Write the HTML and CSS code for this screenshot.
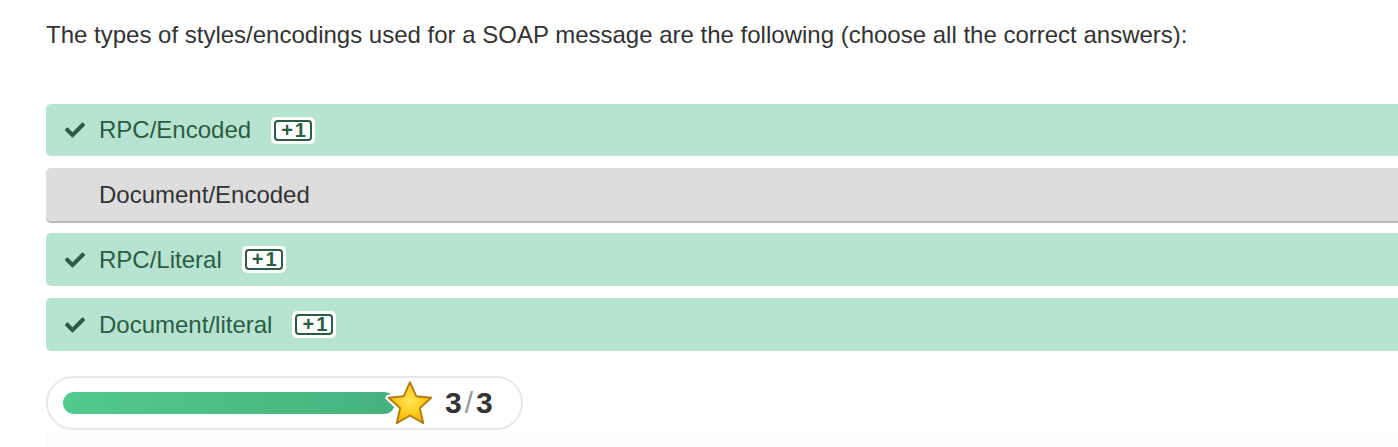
FILE: index.html
```html
<!DOCTYPE html>
<html>
<head>
<meta charset="utf-8">
<link rel="stylesheet" href="styles.css">
</head>
<body>
<div class="quiz">
  <p class="question">The types of styles/encodings used for a SOAP message are the following (choose all the correct answers):</p>
  <div class="answers">
    <div class="answer correct first">
      <svg class="check" viewBox="0 0 512 512" width="20" height="20"><path fill="currentColor" d="M173.898 439.404l-166.4-166.4c-9.997-9.997-9.997-26.206 0-36.204l36.203-36.204c9.997-9.998 26.207-9.998 36.204 0L192 312.69 432.095 72.596c9.997-9.997 26.207-9.997 36.204 0l36.203 36.204c9.997 9.997 9.997 26.206 0 36.204l-294.4 294.401c-9.998 9.997-26.207 9.997-36.204-.001z"/></svg>
      <span class="label">RPC/Encoded</span>
      <span class="badge"><span class="badge-inner">+1</span></span>
    </div>
    <div class="answer neutral">
      <span class="label">Document/Encoded</span>
    </div>
    <div class="answer correct">
      <svg class="check" viewBox="0 0 512 512" width="20" height="20"><path fill="currentColor" d="M173.898 439.404l-166.4-166.4c-9.997-9.997-9.997-26.206 0-36.204l36.203-36.204c9.997-9.998 26.207-9.998 36.204 0L192 312.69 432.095 72.596c9.997-9.997 26.207-9.997 36.204 0l36.203 36.204c9.997 9.997 9.997 26.206 0 36.204l-294.4 294.401c-9.998 9.997-26.207 9.997-36.204-.001z"/></svg>
      <span class="label">RPC/Literal</span>
      <span class="badge"><span class="badge-inner">+1</span></span>
    </div>
    <div class="answer correct">
      <svg class="check" viewBox="0 0 512 512" width="20" height="20"><path fill="currentColor" d="M173.898 439.404l-166.4-166.4c-9.997-9.997-9.997-26.206 0-36.204l36.203-36.204c9.997-9.998 26.207-9.998 36.204 0L192 312.69 432.095 72.596c9.997-9.997 26.207-9.997 36.204 0l36.203 36.204c9.997 9.997 9.997 26.206 0 36.204l-294.4 294.401c-9.998 9.997-26.207 9.997-36.204-.001z"/></svg>
      <span class="label">Document/literal</span>
      <span class="badge"><span class="badge-inner">+1</span></span>
    </div>
  </div>
  <div class="score">
    <div class="track">
      <div class="fill"></div>
      <svg class="star" viewBox="0 0 50 50" width="52" height="52">
        <defs>
          <radialGradient id="sg" cx="50%" cy="45%" r="60%">
            <stop offset="0" stop-color="#ffe65c"/>
            <stop offset="0.55" stop-color="#ffca18"/>
            <stop offset="1" stop-color="#f2aa0a"/>
          </radialGradient>
        </defs>
        <path d="M25 4 L31 17.5 L45.5 19 L34.5 29 L37.8 43.5 L25 36 L12.2 43.5 L15.5 29 L4.5 19 L19 17.5 Z" fill="#fff" stroke="#fff" stroke-width="6" stroke-linejoin="round"/>
        <path d="M25 4 L31 17.5 L45.5 19 L34.5 29 L37.8 43.5 L25 36 L12.2 43.5 L15.5 29 L4.5 19 L19 17.5 Z" fill="url(#sg)" stroke="#b07c12" stroke-width="1.8" stroke-linejoin="round"/>
      </svg>
    </div>
    <div class="count"><span>3</span><span class="slash">/</span><span>3</span></div>
  </div>
  <div class="footer-strip"></div>
</div>
</body>
</html>
```
FILE: styles.css
```css
html, body {
  margin: 0;
  padding: 0;
  background: #fff;
  overflow: hidden;
}
body {
  font-family: "Liberation Sans", Arial, sans-serif;
  color: #333;
}
.quiz {
  padding: 20px 0 0 46px;
}
.question {
  margin: 0;
  font-size: 24px;
  line-height: 30px;
  color: #333;
}
.answers {
  margin-top: 54px;
  display: flex;
  flex-direction: column;
  gap: 12px;
  width: 1400px;
}
.answer {
  display: flex;
  align-items: center;
  height: 53px;
  border-radius: 5px;
  padding-left: 19px;
  font-size: 24px;
  box-sizing: border-box;
}
.correct {
  background: #b7e4d0;
  color: #2a5d43;
}
.correct.first { height: 52px; }
.neutral {
  background: #dddddd;
  color: #333;
  border-bottom: 2px solid #b9b9b9;
  height: 55px;
  padding-left: 53px;
  margin-bottom: -2px;
}
.check {
  color: #2a5d43;
  margin-right: 14px;
  flex: none;
}
.label {
  line-height: 1;
}
.badge {
  margin-left: 20px;
  background: #fff;
  border-radius: 5px;
  padding: 3px;
  display: inline-flex;
}
.badge-inner {
  border: 2px solid #2a5d43;
  border-radius: 4px;
  font-weight: bold;
  font-size: 20px;
  line-height: 17px;
  padding: 0 0 0 3px;
  color: #2a5d43;
  letter-spacing: 2px;
  width: 38px;
  text-align: center;
  box-sizing: border-box;
}
.score {
  margin-top: 25px;
  width: 477px;
  height: 54px;
  box-sizing: border-box;
  border: 2px solid #e8e8e8;
  border-radius: 27px;
  display: flex;
  align-items: center;
  padding-left: 15px;
}
.track {
  position: relative;
  display: flex;
  align-items: center;
  width: 372px;
}
.fill {
  height: 22px;
  width: 332px;
  border-radius: 11px;
  background: linear-gradient(90deg, #53c98c, #45b27e);
}
.star {
  position: absolute;
  left: 321px;
  top: -14px;
}
.count {
  margin-left: 10px;
  font-weight: bold;
  font-size: 30px;
  color: #333;
  display: flex;
  align-items: baseline;
}
.slash {
  color: #9a9a9a;
  font-weight: normal;
  margin: 0 3px;
}
.footer-strip {
  height: 20px;
  margin-top: 2px;
  background: #fcfcfc;
}
```
